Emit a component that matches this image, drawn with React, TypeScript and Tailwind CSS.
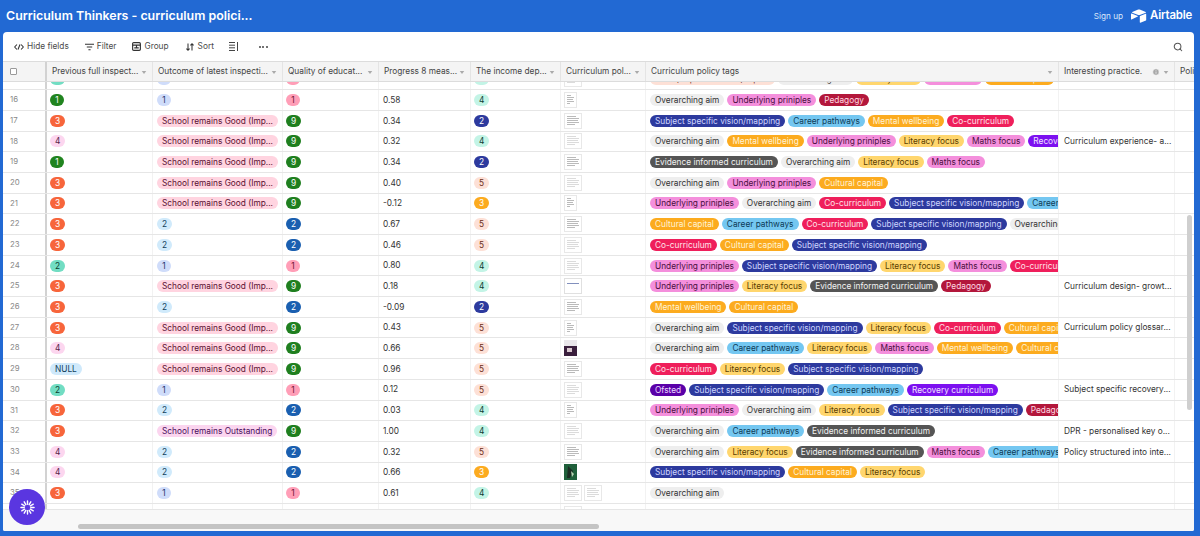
import React from 'react';
import { Search, Info } from 'lucide-react';

const TAGS: Record<string, string> = {
  Intent: 'bg-[#fde0d6] text-[#6b2b18]',
  'Overarching aim': 'bg-[#eeeeee] text-[#333333]',
  'Underlying priniples': 'bg-[#f48fdc] text-[#4a0f3e]',
  Pedagogy: 'bg-[#b3173b] text-[#ffd9e2]',
  'Subject specific vision/mapping': 'bg-[#2d3a9e] text-[#cfd6ff]',
  'Career pathways': 'bg-[#74c7f1] text-[#0c3a56]',
  'Mental wellbeing': 'bg-[#fcab1f] text-[#fff3d6]',
  'Co-curriculum': 'bg-[#ef1f5b] text-[#ffe3ea]',
  'Literacy focus': 'bg-[#ffd66e] text-[#5a3d00]',
  'Maths focus': 'bg-[#f48fdc] text-[#4a0f3e]',
  'Recovery curriculum': 'bg-[#7c10f0] text-[#f1e3ff]',
  'Evidence informed curriculum': 'bg-[#555555] text-[#f2f2f2]',
  'Cultural capital': 'bg-[#fcab1f] text-[#fff3d6]',
  Ofsted: 'bg-[#5a00a8] text-[#ecd9ff]',
};

const OA = 'Overarching aim';
const UP = 'Underlying priniples';
const PE = 'Pedagogy';
const SS = 'Subject specific vision/mapping';
const CP = 'Career pathways';
const MW = 'Mental wellbeing';
const CO = 'Co-curriculum';
const LF = 'Literacy focus';
const MF = 'Maths focus';
const RC = 'Recovery curriculum';
const EV = 'Evidence informed curriculum';
const CC = 'Cultural capital';

const PREV: Record<string, string> = {
  '1': 'bg-[#20841f] text-white',
  '2': 'bg-[#72ddc3] text-[#0b3d31]',
  '3': 'bg-[#f7653b] text-white',
  '4': 'bg-[#fcd6ef] text-[#541e47]',
  NULL: 'bg-[#cfe9fb] text-[#123f5c]',
};
const OUTCOME: Record<string, string> = {
  '1': 'bg-[#cfdcfa] text-[#1c2f66]',
  '2': 'bg-[#d0eafb] text-[#123f5c]',
};
const QUALITY: Record<string, string> = {
  '1': 'bg-[#ff9eb7] text-[#6b1030]',
  '2': 'bg-[#1a5fb0] text-white',
  '9': 'bg-[#1f7f1f] text-white',
};
const INCOME: Record<string, string> = {
  '2': 'bg-[#2d3a9e] text-white',
  '3': 'bg-[#fcab1f] text-white',
  '4': 'bg-[#c3f4e6] text-[#0b3d31]',
  '5': 'bg-[#fde0d6] text-[#6b2b18]',
};

const GOOD = 'School remains Good (Imp...';

type Row = [number, string, string, string, string, string, string, string[], string?];

const ROWS: Row[] = [
  [15, '2', '1', '1', '0.70', '4', 'land', ['Intent', OA, LF, MF, CC, CP]],
  [16, '1', '1', '1', '0.58', '4', 'port', [OA, UP, PE]],
  [17, '3', GOOD, '9', '0.34', '2', 'dense', [SS, CP, MW, CO]],
  [18, '4', GOOD, '9', '0.32', '4', 'land', [OA, MW, UP, LF, MF, RC], 'Curriculum experience- a...'],
  [19, '1', GOOD, '9', '0.34', '2', 'dense', [EV, OA, LF, MF]],
  [20, '3', GOOD, '9', '0.40', '5', 'land', [OA, UP, CC]],
  [21, '3', GOOD, '9', '-0.12', '3', 'port', [UP, OA, CO, SS, CP]],
  [22, '3', '2', '2', '0.67', '5', 'dense', [CC, CP, CO, SS, OA]],
  [23, '3', '2', '2', '0.46', '5', 'land', [CO, CC, SS]],
  [24, '2', '1', '1', '0.80', '4', 'land', [UP, SS, LF, MF, CO]],
  [25, '3', GOOD, '9', '0.18', '4', 'line', [UP, LF, EV, PE], 'Curriculum design- growt...'],
  [26, '3', '2', '2', '-0.09', '2', 'dense', [MW, CC]],
  [27, '3', GOOD, '9', '0.43', '5', 'port', [OA, SS, LF, CO, CC], 'Curriculum policy glossar...'],
  [28, '4', GOOD, '9', '0.66', '5', 'dark', [OA, CP, LF, MF, MW, CC]],
  [29, 'NULL', GOOD, '9', '0.96', '5', 'dense', [CO, LF, SS]],
  [30, '2', '1', '1', '0.12', '5', 'land', ['Ofsted', SS, CP, RC], 'Subject specific recovery...'],
  [31, '3', '2', '2', '0.03', '4', 'port', [UP, OA, LF, SS, PE]],
  [32, '3', 'School remains Outstanding', '9', '1.00', '4', 'land', [OA, CP, EV], 'DPR - personalised key o...'],
  [33, '4', '2', '2', '0.32', '5', 'dense', [OA, LF, EV, MF, CP], 'Policy structured into inte...'],
  [34, '4', '2', '2', '0.66', '3', 'green', [SS, CC, LF]],
  [35, '3', '1', '1', '0.61', '4', 'double', [OA]],
  [36, '', '', '', '', '', 'land', []],
];

const Pill = ({ cls, children }: { cls: string; children: React.ReactNode }) => (
  <span className={`inline-flex h-[12px] min-w-[14px] shrink-0 items-center justify-center whitespace-nowrap rounded-full px-[5px] text-[8.3px] leading-[12px] ${cls}`}>
    {children}
  </span>
);

const Caret = () => (
  <svg viewBox="0 0 8 8" className="h-[6px] w-[6px] shrink-0 fill-[#aaaaaa]">
    <path d="M1 2.5h6L4 6.5z" />
  </svg>
);

const Doc = ({ w, dense }: { w: number; dense?: boolean }) => (
  <svg width={w} height={16} viewBox={`0 0 ${w} 16`} className="shrink-0">
    <rect x=".5" y=".5" width={w - 1} height="15" fill="#fff" stroke="#e8e8e8" />
    <path
      d={`M3 3.5H${w - 6}M3 5.5H${w - 3}M3 7.5H${w - 4}M3 9.5H${w - 3}M3 11.5H${w - 7}`}
      stroke={dense ? '#a8a8a8' : '#d2d2d2'}
      strokeWidth=".8"
    />
  </svg>
);

const Thumb = ({ kind }: { kind: string }) => {
  if (kind === 'port') return <Doc w={13} dense />;
  if (kind === 'dense') return <Doc w={18} dense />;
  if (kind === 'double') {
    return (
      <span className="flex gap-[2px]">
        <Doc w={18} />
        <Doc w={18} />
      </span>
    );
  }
  if (kind === 'line') {
    return (
      <svg width="18" height="16" viewBox="0 0 18 16" className="shrink-0">
        <rect x=".5" y=".5" width="17" height="15" fill="#fff" stroke="#e0e0e0" />
        <path d="M3 5.5H15" stroke="#8290bd" strokeWidth="1" />
      </svg>
    );
  }
  if (kind === 'dark') {
    return (
      <svg width="13" height="16" viewBox="0 0 13 16" className="shrink-0">
        <rect width="13" height="16" fill="#e9e6ea" />
        <rect y="6" width="13" height="10" fill="#3a1f3d" />
        <path d="M3 8h5v4H3z" fill="#d9c8cf" />
      </svg>
    );
  }
  if (kind === 'green') {
    return (
      <svg width="13" height="16" viewBox="0 0 13 16" className="shrink-0">
        <rect width="13" height="16" fill="#1f5f3a" />
        <path d="M4 2l5 5-3 7H3z" fill="#1b2b22" />
        <path d="M7 7l3 3-2 3z" fill="#b9d3b4" />
      </svg>
    );
  }
  return <Doc w={18} />;
};

const COLS = [
  ['Previous full inspect...', 'w-[106px]'],
  ['Outcome of latest inspecti...', 'w-[130px]'],
  ['Quality of educat...', 'w-[96px]'],
  ['Progress 8 meas...', 'w-[92px]'],
  ['The income dep...', 'w-[90px]'],
  ['Curriculum pol...', 'w-[85px]'],
];

export default function App() {
  return (
    <div className="flex h-[536px] w-[1200px] flex-col overflow-hidden bg-[#2269d3] font-['Inter',sans-serif]">
      <header className="flex h-[32px] shrink-0 items-center justify-between pl-[6px] pr-[8px] text-white">
        <h1 className="text-[12.4px] font-semibold leading-none">Curriculum Thinkers - curriculum polici...</h1>
        <div className="flex items-center gap-[8px]">
          <span className="text-[8.2px] text-[#dbe8fb]">Sign up</span>
          <span className="flex items-center gap-[3px]">
            <svg viewBox="0 0 20 17" className="h-[14px] w-[16px] fill-white">
              <path d="M9 .4 1.6 3.4c-.4.2-.4.7 0 .9l7.5 3c.6.2 1.2.2 1.8 0l7.5-3c.4-.2.4-.7 0-.9L10.9.4C10.3.2 9.6.2 9 .4z" />
              <path d="M11 9v7.3c0 .4.4.6.7.5l7-2.7c.2-.1.3-.3.3-.5V6.3c0-.4-.4-.6-.7-.5l-7 2.7c-.2.1-.3.3-.3.5z" />
              <path d="M0 6v6.5c0 .4.4.6.7.5l7.8-4c.3-.1.3-.5 0-.6L.8 5.5C.4 5.3 0 5.6 0 6z" />
            </svg>
            <span className="text-[11.4px] font-semibold tracking-[-0.2px]">Airtable</span>
          </span>
        </div>
      </header>

      <main className="relative ml-[3px] mr-[6px] mb-[5px] flex min-h-0 flex-1 flex-col overflow-hidden rounded-t-[4px] rounded-b-[2px] bg-white">
        <div className="flex h-[29px] shrink-0 items-center px-[11px] text-[8.3px] text-[#4a4a4a]">
          <button className="flex items-center gap-[3px]">
            <svg viewBox="0 0 12 8" className="h-[8px] w-[10px] fill-none stroke-[#333333]" strokeWidth="1.3">
              <path d="M3.5 1 .8 4l2.7 3M8.5 1l2.700 3-2.700 3M7.2 1 4.800 7" />
            </svg>
            Hide fields
          </button>
          <button className="ml-[16px] flex items-center gap-[3px]">
            <svg viewBox="0 0 10 8" className="h-[8px] w-[9px] stroke-[#333333]" strokeWidth="1.2">
              <path d="M0 1h10M2 4h6M3.8 7h2.4" />
            </svg>
            Filter
          </button>
          <button className="ml-[16px] flex items-center gap-[3px]">
            <svg viewBox="0 0 10 10" className="h-[9px] w-[9px] fill-none stroke-[#333333]" strokeWidth="1.3">
              <rect x=".7" y=".7" width="8.6" height="8.6" rx="1.2" />
              <path d="M.7 3.5h8.6M5 3.5V6.5M2.5 6.5H7.5" />
            </svg>
            Group
          </button>
          <button className="ml-[17px] flex items-center gap-[4px]">
            <svg viewBox="0 0 10 9" className="h-[8px] w-[8px] fill-none stroke-[#333333]" strokeWidth="1.3">
              <path d="M2.5 0v8.5M.5 6.5l2 2 2-2M7.5 9V.5M5.5 2.5l2-2 2 2" />
            </svg>
            Sort
          </button>
          <button className="ml-[15px]">
            <svg viewBox="0 0 10 9" className="h-[9px] w-[10px] fill-none stroke-[#444444]" strokeWidth="1">
              <path d="M0 .5h6M0 3.2h6M0 5.8h6M0 8.5h6M8.5 0v9" />
            </svg>
          </button>
          <button className="ml-[20px] flex items-center gap-[1.5px]">
            <span className="h-[2px] w-[2px] rounded-full bg-[#444444]" />
            <span className="h-[2px] w-[2px] rounded-full bg-[#444444]" />
            <span className="h-[2px] w-[2px] rounded-full bg-[#444444]" />
          </button>
          <Search className="ml-auto h-[10px] w-[10px] text-[#555555]" strokeWidth={2.5} />
        </div>

        <div className="flex h-[21px] shrink-0 border-y border-[#dcdcdc] bg-[#f4f4f4] text-[8.3px] text-[#444444]">
          <div className="flex w-[44px] shrink-0 items-center border-r-2 border-[#d2d2d2] pl-[7px]">
            <span className="h-[7px] w-[7px] rounded-[1px] border border-[#9a9a9a] bg-white" />
          </div>
          {COLS.map(([name, w]) => (
            <div key={name} className={`flex ${w} shrink-0 items-center justify-between whitespace-nowrap border-r border-[#e4e4e4] px-[5px]`}>
              <span>{name}</span>
              <Caret />
            </div>
          ))}
          <div className="flex w-[413px] shrink-0 items-center justify-between border-r border-[#e4e4e4] px-[5px]">
            <span>Curriculum policy tags</span>
            <Caret />
          </div>
          <div className="flex w-[116px] shrink-0 items-center border-r border-[#e4e4e4] px-[5px]">
            <span>Interesting practice.</span>
            <Info className="ml-auto mr-[3px] h-[8px] w-[8px] fill-[#a8a8a8] text-white" />
            <Caret />
          </div>
          <div className="flex items-center overflow-hidden pl-[5px]">Policy</div>
        </div>

        <div className="min-h-0 flex-1 overflow-hidden">
          <div className="-mt-[12.5px]">
            {ROWS.map(([num, prev, outcome, quality, p8, income, thumb, tags, note]) => (
              <div key={num} className="flex h-[20.7px] border-b border-[#e6e6e6] text-[8.3px] text-[#333333]">
                <div className="flex w-[44px] shrink-0 items-center border-r-2 border-[#d2d2d2] pl-[7px] text-[7.8px] text-[#888888]">{num}</div>
                <div className="flex w-[106px] shrink-0 items-center border-r border-[#f2f2f2] pl-[3px]">
                  {prev && <Pill cls={PREV[prev]}>{prev}</Pill>}
                </div>
                <div className="flex w-[130px] shrink-0 items-center border-r border-[#f2f2f2] pl-[4px]">
                  {outcome && (
                    <Pill cls={OUTCOME[outcome] ?? (outcome === GOOD ? 'bg-[#ffd4e0] text-[#5a1031]' : 'bg-[#fbd5ef] text-[#4a0f5c]')}>{outcome}</Pill>
                  )}
                </div>
                <div className="flex w-[96px] shrink-0 items-center border-r border-[#f2f2f2] pl-[3px]">
                  {quality && <Pill cls={QUALITY[quality]}>{quality}</Pill>}
                </div>
                <div className="flex w-[92px] shrink-0 items-center border-r border-[#f2f2f2] pl-[4px]">{p8}</div>
                <div className="flex w-[90px] shrink-0 items-center border-r border-[#f2f2f2] pl-[3px]">
                  {income && <Pill cls={INCOME[income]}>{income}</Pill>}
                </div>
                <div className="flex w-[85px] shrink-0 items-center border-r border-[#f2f2f2] pl-[3px]">
                  <Thumb kind={thumb} />
                </div>
                <div className="flex w-[413px] shrink-0 items-center gap-[3px] overflow-hidden border-r border-[#f2f2f2] pl-[4px]">
                  {tags.map((t) => (
                    <Pill key={t} cls={TAGS[t]}>{t === 'Intent' ? 'Intent/Implementation/Impact' : t}</Pill>
                  ))}
                </div>
                <div className="flex w-[116px] shrink-0 items-center overflow-hidden whitespace-nowrap border-r border-[#f2f2f2] pl-[5px]">{note}</div>
              </div>
            ))}
          </div>
        </div>

        <div className="relative h-[22px] shrink-0 border-t border-[#e6e6e6] bg-[#f8f8f8]">
          <div className="ml-[75px] mt-[14px] h-[5px] w-[521px] rounded-full bg-[#c4c4c4]" />
        </div>

        <div className="absolute right-[2px] top-[183px] h-[195px] w-[5px] rounded-full bg-[#cfcfcf]" />
        <button className="absolute bottom-[6px] left-[6px] flex h-[36px] w-[36px] items-center justify-center rounded-full bg-[#5a36e0]">
          <svg viewBox="0 0 16 16" className="h-[15px] w-[15px] stroke-white" strokeWidth="1.5" strokeLinecap="round">
            <path d="M8 1v3.500M8 11.500V15M1 8h3.500M11.500 8H15M11.500 1.900l-1.700 3M6.200 11.100l-1.700 3M14.100 4.500l-3 1.700M4.900 9.800l-3 1.700M14.100 11.500l-3-1.700M4.900 6.200l-3-1.700M11.500 14.100l-1.700-3M6.200 4.900l-1.700-3" />
          </svg>
        </button>
      </main>
    </div>
  );
}
